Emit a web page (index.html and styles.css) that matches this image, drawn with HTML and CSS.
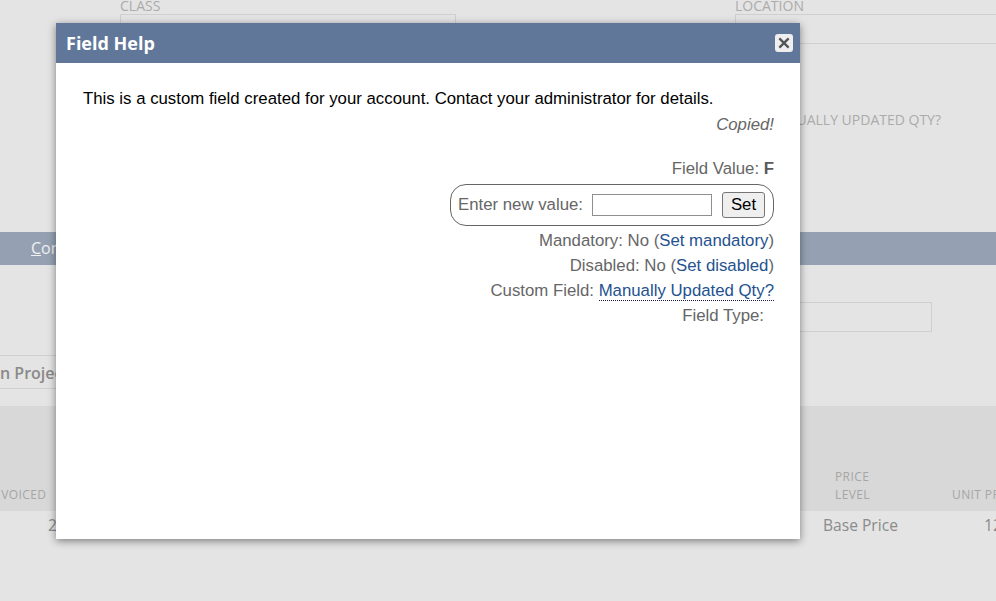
FILE: index.html
```html
<!DOCTYPE html>
<html lang="en">
<head>
<meta charset="utf-8">
<title>Field Help</title>
<link rel="stylesheet" href="styles.css">
</head>
<body>
<div class="page">
  <div class="fields-top">
    <div class="field field-class">
      <div class="label">CLASS</div>
      <div class="box box-class"></div>
    </div>
    <div class="field field-location">
      <div class="label">LOCATION</div>
      <div class="box box-location"></div>
    </div>
  </div>
  <div class="qty-row"><span class="label">MANUALLY UPDATED QTY?</span></div>
  <div class="band"><span class="band-tab"><u>C</u>ommunication</span></div>
  <div class="box-row"><div class="box box-wide"></div></div>
  <div class="action-row"><span class="action">n Project</span></div>
  <div class="table-head">
    <div class="th th-invoiced">INVOICED</div>
    <div class="th th-price">PRICE<br>LEVEL</div>
    <div class="th th-unit">UNIT PRICE</div>
  </div>
  <div class="table-row">
    <div class="td td-invoiced">2</div>
    <div class="td td-price">Base Price</div>
    <div class="td td-unit">12.00</div>
  </div>
</div>

<div class="modal">
  <div class="modal-title">
    <span class="title-text">Field Help</span>
    <span class="close">
      <svg viewBox="0 0 12 12" width="14" height="14"><path d="M2 2 L10 10 M10 2 L2 10" stroke="#555" stroke-width="2" fill="none"/></svg>
    </span>
  </div>
  <div class="modal-body">
    <p class="desc">This is a custom field created for your account. Contact your administrator for details.</p>
    <div class="info">
      <div class="copied">Copied!</div>
      <div class="line value-line">Field Value: <b>F</b></div>
      <div class="set-pill">
        <span>Enter new value:</span>
        <input class="set-input" type="text">
        <button class="set-btn" type="button">Set</button>
      </div>
      <div class="line">Mandatory: No (<a href="#">Set mandatory</a>)</div>
      <div class="line">Disabled: No (<a href="#">Set disabled</a>)</div>
      <div class="line">Custom Field: <a href="#" class="dotted">Manually Updated Qty?</a></div>
      <div class="line type-line">Field Type:</div>
    </div>
  </div>
</div>
</body>
</html>
```

FILE: styles.css
```css
* { box-sizing: border-box; }
html, body { margin: 0; padding: 0; }
body { width: 996px; height: 601px; overflow: hidden; position: relative; font-family: "Open Sans", sans-serif; background: #e4e4e4; }

.page { height: 601px; overflow: hidden; background: #e4e4e4; color: #8b8b8b; }
.label { font-size: 14px; line-height: 16px; color: #ababab; }
.box { border: 1px solid #cfcfcf; }

.fields-top { display: flex; height: 44px; margin-top: -2px; padding-left: 120px; }
.field-class { width: 615px; flex: none; }
.field-location { flex: none; width: 400px; }
.box-class { width: 336px; height: 30px; }
.box-location { width: 400px; height: 30px; }

.qty-row { height: 188px; padding: 64px 55px 0 0; text-align: right; margin-top: 2px; }

.band { height: 33px; background: #95a1b2; padding-left: 31px; font-size: 16px; line-height: 33px; color: #f0f0f0; }
.band-tab { white-space: nowrap; }

.box-row { height: 90px; padding: 37px 0 0 600px; }
.box-wide { width: 332px; height: 30px; }

.action-row { height: 51px; overflow: hidden; }
.action { display: block; width: 100px; height: 34px; border: 1px solid #cfcfcf; border-left: 0; font-size: 16px; font-weight: 600; line-height: 34px; color: #8a8a8a; white-space: nowrap; }

.table-head { display: flex; align-items: flex-end; height: 105px; background: #d8d8d8; padding-bottom: 7px; font-size: 12px; line-height: 18px; color: #a6a6a6; }
.th { flex: none; white-space: nowrap; letter-spacing: 0.4px; }
.th-invoiced { margin-left: -12px; width: 847px; }
.th-price { width: 117px; }

.table-row { display: flex; height: 30px; padding-top: 3px; font-size: 15.6px; line-height: 22px; color: #8b8b8b; }
.td { flex: none; white-space: nowrap; }
.td-invoiced { margin-left: 48px; width: 775px; }
.td-price { width: 161px; }

.modal { position: absolute; left: 56px; top: 23px; width: 744px; height: 516px; background: #fff; box-shadow: 0 2px 8px rgba(0,0,0,0.45); }
.modal-title { display: flex; align-items: center; justify-content: space-between; height: 40px; padding: 0 7px 0 10px; background: #607799; }
.title-text { font-size: 18px; font-weight: 700; color: #fff; }
.close { display: flex; align-items: center; justify-content: center; width: 18px; height: 18px; background: #efefef; border-radius: 3px; }

.modal-body { padding: 26px 26px 0 27px; font-family: "Liberation Sans", Arial, sans-serif; font-size: 16.8px; line-height: 20px; color: #666; }
.desc { margin: 0; color: #000; }
.info { display: flex; flex-direction: column; align-items: flex-end; }
.copied { margin-top: 6px; font-style: italic; }
.line { height: 25px; line-height: 25px; white-space: nowrap; }
.value-line { margin-top: 21px; height: 24px; }
.value-line b { color: #5a5a5a; }
.set-pill { display: flex; align-items: center; width: 324px; height: 42px; margin: 4px 0 2px; padding: 0 7px; border: 1px solid #666; border-radius: 16px; }
.set-input { flex: none; width: 120px; height: 22px; margin: 0 10px 0 9px; padding: 0; border: 1px solid #8f8f8f; background: #fff; }
.set-btn { flex: none; width: 43px; height: 26px; padding: 0; border: 1px solid #767676; border-radius: 3px; background: #efefef; font-family: "Liberation Sans", Arial, sans-serif; font-size: 16.8px; color: #000; }
a { color: #24528f; text-decoration: none; }
.dotted { border-bottom: 1px dotted #1a1a4a; }
.type-line { padding-right: 10px; }
```
